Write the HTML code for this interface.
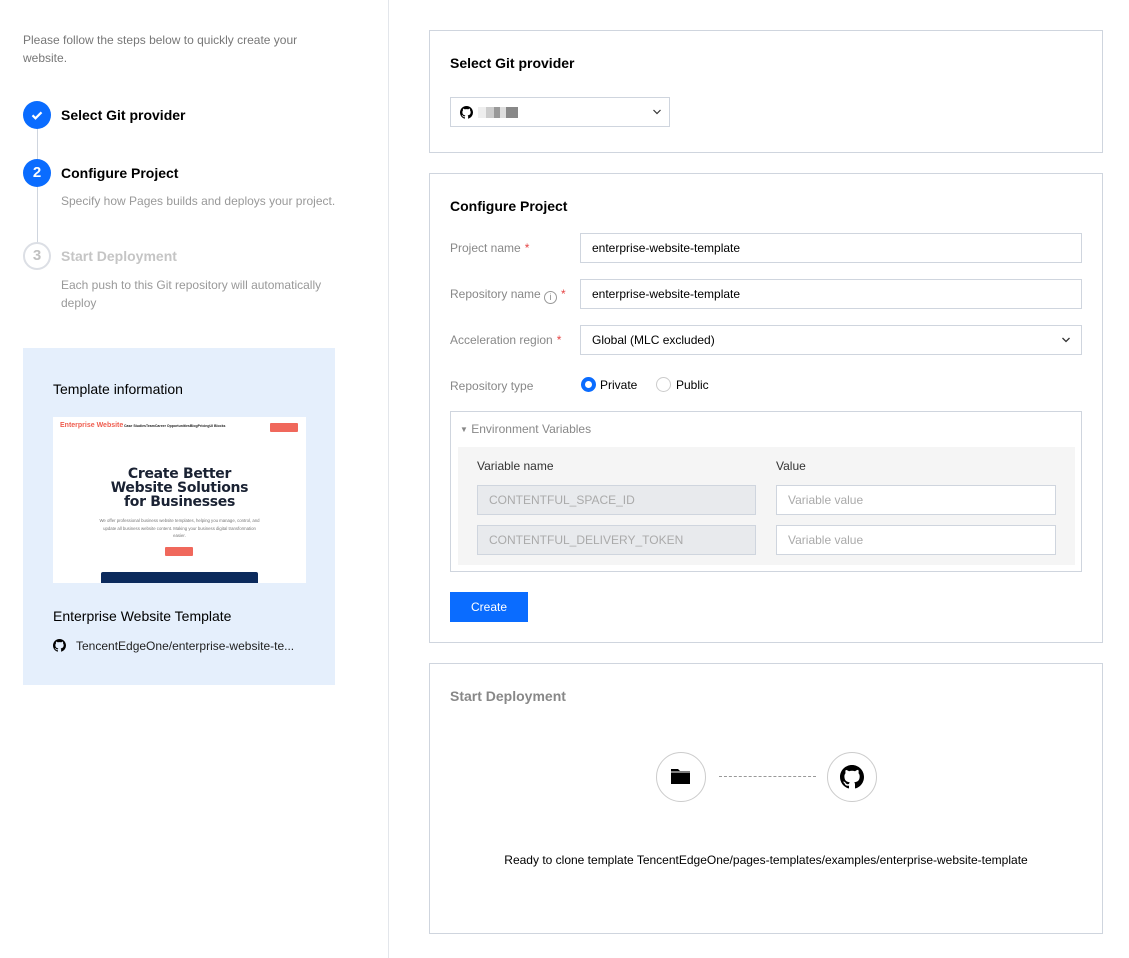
<!DOCTYPE html>
<html><head><meta charset="utf-8"><style>
*{box-sizing:border-box;margin:0;padding:0}
body{width:1129px;height:958px;background:#fff;font-family:"Liberation Sans",Arial,sans-serif;position:relative;overflow:hidden;color:#000}
.a{position:absolute}
.card{position:absolute;left:429px;width:674px;border:1px solid #cfd5de;background:#fff}
.h{font-weight:bold;font-size:14px;color:#000}
.inp{position:absolute;border:1px solid #cfd5de;height:30px;font-size:12px;line-height:28px;padding-left:11px;color:#000;background:#fff}
.lbl{position:absolute;left:20px;font-size:12px;color:#888}
.req{color:#e54545;margin-left:4px}
</style></head><body>
<div class="a" style="left:388px;top:0;width:1px;height:958px;background:#e3e6eb"></div>
<div class="a" style="left:23px;top:31px;width:300px;font-size:12px;line-height:18px;color:#777">Please follow the steps below to quickly create your website.</div>

<div class="a" style="left:37px;top:128px;width:1px;height:117px;background:#cfd5de"></div>
<div class="a" style="left:23px;top:101px;width:28px;height:28px;border-radius:50%;background:#0a6cff"></div>
<svg class="a" style="left:29px;top:107px" width="16" height="16" viewBox="0 0 16 16"><path d="M3.5 8.3l3 3 6-6" stroke="#fff" stroke-width="2.2" fill="none"/></svg>
<div class="a h" style="left:61px;top:107px">Select Git provider</div>
<div class="a" style="left:23px;top:159px;width:28px;height:28px;border-radius:50%;background:#0a6cff;color:#fff;font-weight:bold;font-size:15px;text-align:center;line-height:28px">2</div>
<div class="a h" style="left:61px;top:165px">Configure Project</div>
<div class="a" style="left:61px;top:194px;font-size:12px;color:#999">Specify how Pages builds and deploys your project.</div>
<div class="a" style="left:23px;top:242px;width:28px;height:28px;border-radius:50%;border:2px solid #dcdfe5;background:#fff;color:#c0c0c0;font-weight:bold;font-size:15px;text-align:center;line-height:24px">3</div>
<div class="a h" style="left:61px;top:248px;color:#c5c5c5">Start Deployment</div>
<div class="a" style="left:61px;top:276px;width:280px;font-size:12px;line-height:18px;color:#999">Each push to this Git repository will automatically deploy</div>

<div class="a" style="left:23px;top:348px;width:312px;height:337px;background:#e5effc"></div>
<div class="a" style="left:53px;top:381px;font-size:14px;color:#000">Template information</div>
<div class="a" style="left:53px;top:417px;width:253px;height:166px;background:#fff;overflow:hidden">
 <div class="a" style="left:7px;top:5px;font-size:7px;font-weight:bold;color:#ef5d4f">Enterprise Website</div>
 <div class="a" style="left:71px;top:7px;font-size:3.5px;font-weight:bold;color:#222">Case StudiesTeamCareer OpportunitiesBlogPricingUI Blocks</div>
 <div class="a" style="left:217px;top:6px;width:28px;height:9px;background:#f0685c;border-radius:1px"></div>
 <div class="a" style="left:0;top:50px;width:253px;text-align:center;font-family:'DejaVu Sans',sans-serif;font-weight:bold;font-size:14px;line-height:14px;color:#1a2233;letter-spacing:-0.3px">Create Better<br>Website Solutions<br>for Businesses</div>
 <div class="a" style="left:45px;top:100px;width:163px;text-align:center;font-size:4.3px;line-height:7.5px;color:#777">We offer professional business website templates, helping you manage, control, and update all business website content. Making your business digital transformation easier.</div>
 <div class="a" style="left:112px;top:130px;width:28px;height:9px;background:#f0685c;border-radius:1px"></div>
 <div class="a" style="left:48px;top:155px;width:157px;height:20px;background:#0b2a5c;border-radius:2px"></div>
</div>
<div class="a" style="left:53px;top:608px;font-size:14px;color:#000">Enterprise Website Template</div>
<svg class="a" style="left:53px;top:639px" width="13" height="13" viewBox="0 0 16 16"><path fill="#000" d="M8 0C3.58 0 0 3.58 0 8c0 3.54 2.29 6.53 5.47 7.590.4.07.55-.17.55-.38 0-.19-.01-.82-.01-1.49-2.01.37-2.53-.49-2.69-.94-.09-.23-.48-.94-.82-1.13-.28-.15-.68-.52-.01-.53.63-.01 1.08.58 1.23.82.72 1.21 1.87.87 2.33.66.07-.52.28-.87.51-1.07-1.78-.2-3.64-.89-3.64-3.95 0-.87.31-1.59.82-2.15-.08-.2-.36-1.02.08-2.12 0 0 .67-.21 2.2.82.64-.18 1.32-.27 2-.27.68 0 1.36.09 2 .27 1.53-1.04 2.2-.82 2.2-.82.44 1.1.16 1.92.08 2.12.51.56.82 1.27.82 2.15 0 3.07-1.87 3.75-3.65 3.95.29.25.54.73.54 1.48 0 1.07-.01 1.93-.01 2.2 0 .21.15.46.55.38A8.013 8.013 0 0016 8c0-4.42-3.58-8-8-8z"/></svg>
<div class="a" style="left:76px;top:639px;font-size:12px;color:#222">TencentEdgeOne/enterprise-website-te...</div>

<div class="card" style="top:30px;height:123px">
 <div class="a h" style="left:20px;top:24px">Select Git provider</div>
 <div class="inp" style="left:20px;top:66px;width:220px"></div>
 <svg class="a" style="left:30px;top:75px" width="13" height="13" viewBox="0 0 16 16"><path fill="#000" d="M8 0C3.58 0 0 3.58 0 8c0 3.54 2.29 6.53 5.47 7.59.4.07.55-.17.55-.38 0-.19-.01-.82-.01-1.49-2.01.37-2.53-.49-2.69-.94-.09-.23-.48-.94-.82-1.13-.28-.15-.68-.52-.01-.53.63-.01 1.08.58 1.23.82.72 1.21 1.87.87 2.33.66.07-.52.28-.87.51-1.07-1.78-.2-3.64-.89-3.64-3.95 0-.87.31-1.59.82-2.15-.08-.2-.36-1.02.08-2.12 0 0 .67-.21 2.2.82.64-.18 1.32-.27 2-.27.68 0 1.36.09 2 .27 1.53-1.04 2.2-.82 2.2-.82.44 1.1.16 1.92.08 2.12.51.56.82 1.27.82 2.15 0 3.07-1.87 3.75-3.65 3.95.29.25.54.73.54 1.48 0 1.07-.01 1.93-.01 2.2 0 .21.15.46.55.38A8.013 8.013 0 0016 8c0-4.42-3.58-8-8-8z"/></svg>
 <div class="a" style="left:48px;top:76px;width:40px;height:11px;background:linear-gradient(90deg,#eee 0 20%,#ccc 20% 40%,#999 40% 55%,#ddd 55% 70%,#888 70% 100%)"></div>
 <svg class="a" style="left:222px;top:77px" width="10" height="8" viewBox="0 0 10 8"><path d="M1.5 2l3.5 3.5L8.5 2" stroke="#333" stroke-width="1.2" fill="none"/></svg>
</div>

<div class="card" style="top:173px;height:470px">
 <div class="a h" style="left:20px;top:24px">Configure Project</div>
 <div class="lbl" style="top:67px">Project name<span class="req">*</span></div>
 <div class="inp" style="left:150px;top:59px;width:502px">enterprise-website-template</div>
 <div class="lbl" style="top:113px">Repository name <span style="display:inline-block;width:13px;height:13px;border:1px solid #999;border-radius:50%;font-size:9px;line-height:11px;text-align:center;vertical-align:-2px">i</span><span class="req">*</span></div>
 <div class="inp" style="left:150px;top:105px;width:502px">enterprise-website-template</div>
 <div class="lbl" style="top:159px">Acceleration region<span class="req">*</span></div>
 <div class="inp" style="left:150px;top:151px;width:502px">Global (MLC excluded)</div>
 <svg class="a" style="left:631px;top:162px" width="10" height="8" viewBox="0 0 10 8"><path d="M1.5 2l3.5 3.5L8.5 2" stroke="#333" stroke-width="1.3" fill="none"/></svg>
 <div class="lbl" style="top:205px">Repository type</div>
 <div class="a" style="left:151px;top:203px;width:15px;height:15px;border-radius:50%;border:4px solid #0a6cff"></div>
 <div class="a" style="left:170px;top:204px;font-size:12px">Private</div>
 <div class="a" style="left:226px;top:203px;width:15px;height:15px;border-radius:50%;border:1px solid #ccc"></div>
 <div class="a" style="left:246px;top:204px;font-size:12px">Public</div>
 <div class="a" style="left:20px;top:237px;width:632px;height:161px;border:1px solid #cfd5de">
  <div class="a" style="left:9px;top:10px;font-size:12px;color:#888"><span style="font-size:8px;vertical-align:1px">▼</span> Environment Variables</div>
  <div class="a" style="left:7px;top:35px;width:617px;height:118px;background:#f5f5f5">
   <div class="a" style="left:19px;top:12px;font-size:12px;color:#333">Variable name</div>
   <div class="a" style="left:318px;top:12px;font-size:12px;color:#333">Value</div>
   <div class="inp" style="left:19px;top:38px;width:279px;background:#e8eaed;color:#aaa">CONTENTFUL_SPACE_ID</div>
   <div class="inp" style="left:318px;top:38px;width:280px;color:#aaa">Variable value</div>
   <div class="inp" style="left:19px;top:78px;width:279px;background:#e8eaed;color:#aaa">CONTENTFUL_DELIVERY_TOKEN</div>
   <div class="inp" style="left:318px;top:78px;width:280px;color:#aaa">Variable value</div>
  </div>
 </div>
 <div class="a" style="left:20px;top:418px;width:78px;height:30px;background:#0a6cff;color:#fff;font-size:12px;text-align:center;line-height:30px">Create</div>
</div>

<div class="card" style="top:663px;height:271px">
 <div class="a h" style="left:20px;top:24px;color:#888">Start Deployment</div>
 <div class="a" style="left:226px;top:88px;width:50px;height:50px;border-radius:50%;border:1px solid #ccc"></div>
 <svg class="a" style="left:240px;top:102px" width="22" height="20" viewBox="0 0 22 20"><path d="M1 3h7l2 2h10v13H1z" fill="#000"/><path d="M1 6h20" stroke="#fff" stroke-width="1"/></svg>
 <div class="a" style="left:289px;top:112px;width:97px;border-top:1px dashed #999"></div>
 <div class="a" style="left:397px;top:88px;width:50px;height:50px;border-radius:50%;border:1px solid #ccc"></div>
 <svg class="a" style="left:410px;top:101px" width="24" height="24" viewBox="0 0 16 16"><path fill="#000" d="M8 0C3.58 0 0 3.58 0 8c0 3.54 2.29 6.53 5.47 7.59.4.07.55-.17.55-.38 0-.19-.01-.82-.01-1.49-2.01.37-2.53-.49-2.69-.94-.09-.23-.48-.94-.82-1.13-.28-.15-.68-.52-.01-.53.63-.01 1.08.58 1.23.82.72 1.21 1.87.87 2.33.66.07-.52.28-.87.51-1.07-1.78-.2-3.64-.89-3.64-3.95 0-.87.31-1.59.82-2.15-.08-.2-.36-1.02.08-2.12 0 0 .67-.21 2.2.82.64-.18 1.32-.27 2-.27.68 0 1.36.09 2 .27 1.53-1.04 2.2-.82 2.2-.82.44 1.1.16 1.92.08 2.12.51.56.82 1.27.82 2.15 0 3.07-1.87 3.75-3.65 3.95.29.25.54.73.54 1.48 0 1.07-.01 1.93-.01 2.2 0 .21.15.46.55.38A8.013 8.013 0 0016 8c0-4.42-3.58-8-8-8z"/></svg>
 <div class="a" style="left:0;top:189px;width:672px;text-align:center;font-size:12px;color:#000">Ready to clone template TencentEdgeOne/pages-templates/examples/enterprise-website-template</div>
</div>
</body></html>
